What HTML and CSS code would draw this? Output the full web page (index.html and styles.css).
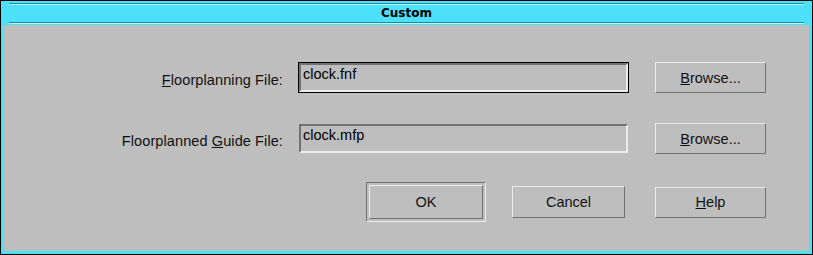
FILE: index.html
```html
<!DOCTYPE html>
<html lang="en">
<head>
  <meta charset="UTF-8">
  <title>Custom</title>
  <link rel="stylesheet" href="styles.css">
</head>
<body>

  <div class="window">
    <div class="titlebar">
      <div class="title-inner">Custom</div>
    </div>

    <div class="content">
      <div class="row">
        <label class="field-label"><u>F</u>loorplanning File:</label>
        <div class="field focused"><div class="field-box">clock.fnf</div></div>
        <button class="btn"><u>B</u>rowse...</button>
      </div>

      <div class="row">
        <label class="field-label">Floorplanned <u>G</u>uide File:</label>
        <div class="field"><div class="field-box">clock.mfp</div></div>
        <button class="btn"><u>B</u>rowse...</button>
      </div>

      <div class="actions">
        <div class="default-ring"><button class="btn ok-btn">OK</button></div>
        <button class="btn cancel-btn">Cancel</button>
        <button class="btn"><u>H</u>elp</button>
      </div>
    </div>
  </div>

</body>
</html>
```

FILE: styles.css
```css
:root {
  --frame: #4ce1f9;
  --frame-dark: #1e8c9e;
  --frame-light: #b8f4fd;
  --panel: #bebebe;
  --shadow: #727272;
  --light: #ececec;
}

body {
  margin: 0;
  background: #000;
  font-family: 'Liberation Sans', Arial, sans-serif;
  font-size: 14.5px;
  color: #000;
}

.window {
  width: 813px;
  height: 255px;
  box-sizing: border-box;
  border: 1px solid #000;
  background: var(--frame);
  padding: 0 3px 3px 3px;
  display: flex;
  flex-direction: column;
}

/* barra de titulo */
.titlebar {
  height: 24px;
  box-sizing: border-box;
  padding: 2px 5px 0 5px;
}

.title-inner {
  height: 20px;
  box-sizing: border-box;
  border-top: 1px solid var(--frame-dark);
  border-bottom: 1px solid var(--frame-dark);
  box-shadow: inset 0 1px 0 var(--frame-light), 0 1px 0 var(--frame-light);
  display: flex;
  justify-content: center;
  align-items: center;
  font-family: 'DejaVu Sans', sans-serif;
  font-weight: bold;
  font-size: 12px;
  color: #000;
}

.content {
  flex: 1;
  background: var(--panel);
  padding-top: 37px;
}

.row {
  display: flex;
  align-items: flex-start;
  margin-bottom: 30px;
}

.field-label {
  width: 279px;
  margin-right: 15px;
  text-align: right;
  padding-top: 10px;
  line-height: 17px;
  letter-spacing: 0.1px;
  color: #111;
}

.field {
  width: 331px;
  height: 31px;
  box-sizing: border-box;
  border: 1px solid var(--panel);
  margin-right: 26px;
}

.field.focused {
  border-color: #000;
}

.field-box {
  height: 100%;
  box-sizing: border-box;
  border: 2px solid;
  border-color: var(--shadow) var(--light) var(--light) var(--shadow);
  padding: 1px 0 0 2px;
  line-height: 17px;
}

.btn {
  width: 111px;
  height: 31px;
  box-sizing: border-box;
  background: var(--panel);
  border: 1px solid;
  border-color: var(--light) var(--shadow) var(--shadow) var(--light);
  font-family: 'Liberation Sans', Arial, sans-serif;
  font-size: 14.5px;
  color: #111;
  padding: 0;
  cursor: pointer;
}

.actions {
  display: flex;
  align-items: center;
  margin-top: -2px;
  padding-left: 362px;
}

.default-ring {
  width: 120px;
  height: 40px;
  box-sizing: border-box;
  border: 1px solid;
  border-color: var(--shadow) var(--light) var(--light) var(--shadow);
  padding: 2px;
  margin-right: 26px;
}

.ok-btn {
  width: 100%;
  height: 100%;
}

.cancel-btn {
  width: 113px;
  height: 32px;
  margin-right: 30px;
}
```
